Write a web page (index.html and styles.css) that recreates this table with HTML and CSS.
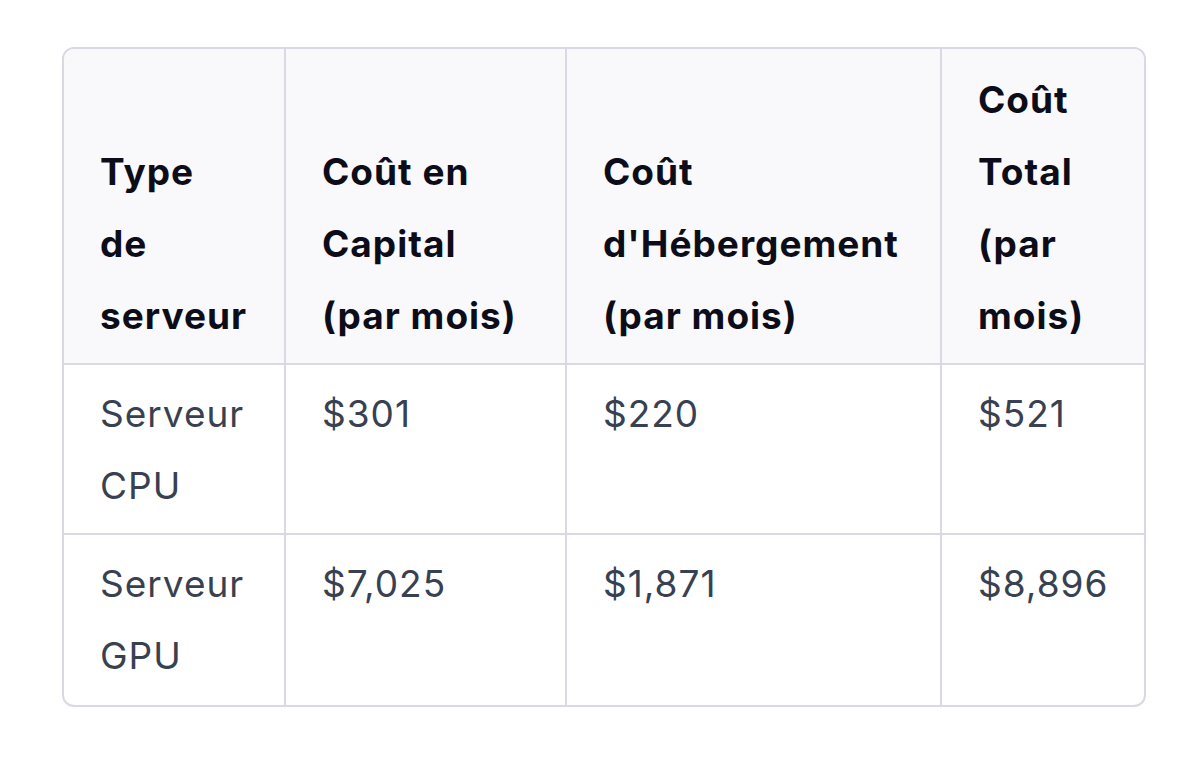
FILE: index.html
```html
<!DOCTYPE html>
<html lang="fr">
<head>
<meta charset="utf-8">
<link rel="stylesheet" href="styles.css">
</head>
<body>
<div class="wrap">
  <table class="cost">
    <colgroup>
      <col class="c1"><col class="c2"><col class="c3"><col class="c4">
    </colgroup>
    <thead>
      <tr>
        <th>Type de serveur</th>
        <th>Coût en Capital (par mois)</th>
        <th>Coût d'Hébergement (par mois)</th>
        <th>Coût Total (par mois)</th>
      </tr>
    </thead>
    <tbody>
      <tr>
        <td>Serveur CPU</td>
        <td>$301</td>
        <td>$220</td>
        <td>$521</td>
      </tr>
      <tr>
        <td>Serveur GPU</td>
        <td>$7,025</td>
        <td>$1,871</td>
        <td>$8,896</td>
      </tr>
    </tbody>
  </table>
</div>
</body>
</html>
```

FILE: styles.css
```css
html, body {
  margin: 0;
  padding: 0;
  background: #ffffff;
}
body {
  font-family: Inter, "Noto Sans", "Liberation Sans", sans-serif;
  padding: 47px 0 0 62px;
}
.wrap {
  width: 1080px;
  border: 2px solid #d9d9e3;
  border-radius: 12px;
  overflow: hidden;
}
.cost {
  width: 1080px;
  table-layout: fixed;
  border-collapse: separate;
  border-spacing: 0;
  font-size: 37px;
  line-height: 72px;
}
.c1 { width: 222px; }
.c2 { width: 281px; }
.c3 { width: 375px; }
.c4 { width: 202px; }
.cost th,
.cost td {
  text-align: left;
  padding: 15px 34px 11px 36px;
  border-right: 2px solid #d9d9e3;
  border-bottom: 2px solid #d9d9e3;
}
.cost th:last-child,
.cost td:last-child {
  border-right: none;
}
.cost tbody tr:last-child td {
  border-bottom: none;
  padding-bottom: 13px;
}
.cost th {
  background: #f9f9fb;
  color: #0d0d1a;
  font-weight: 700;
  vertical-align: bottom;
  height: 288px;
  letter-spacing: 1px;
}
.cost td {
  color: #374151;
  font-weight: 400;
  vertical-align: top;
  padding-top: 13px;
  padding-bottom: 11px;
  height: 144px;
  letter-spacing: 1px;
}
```
